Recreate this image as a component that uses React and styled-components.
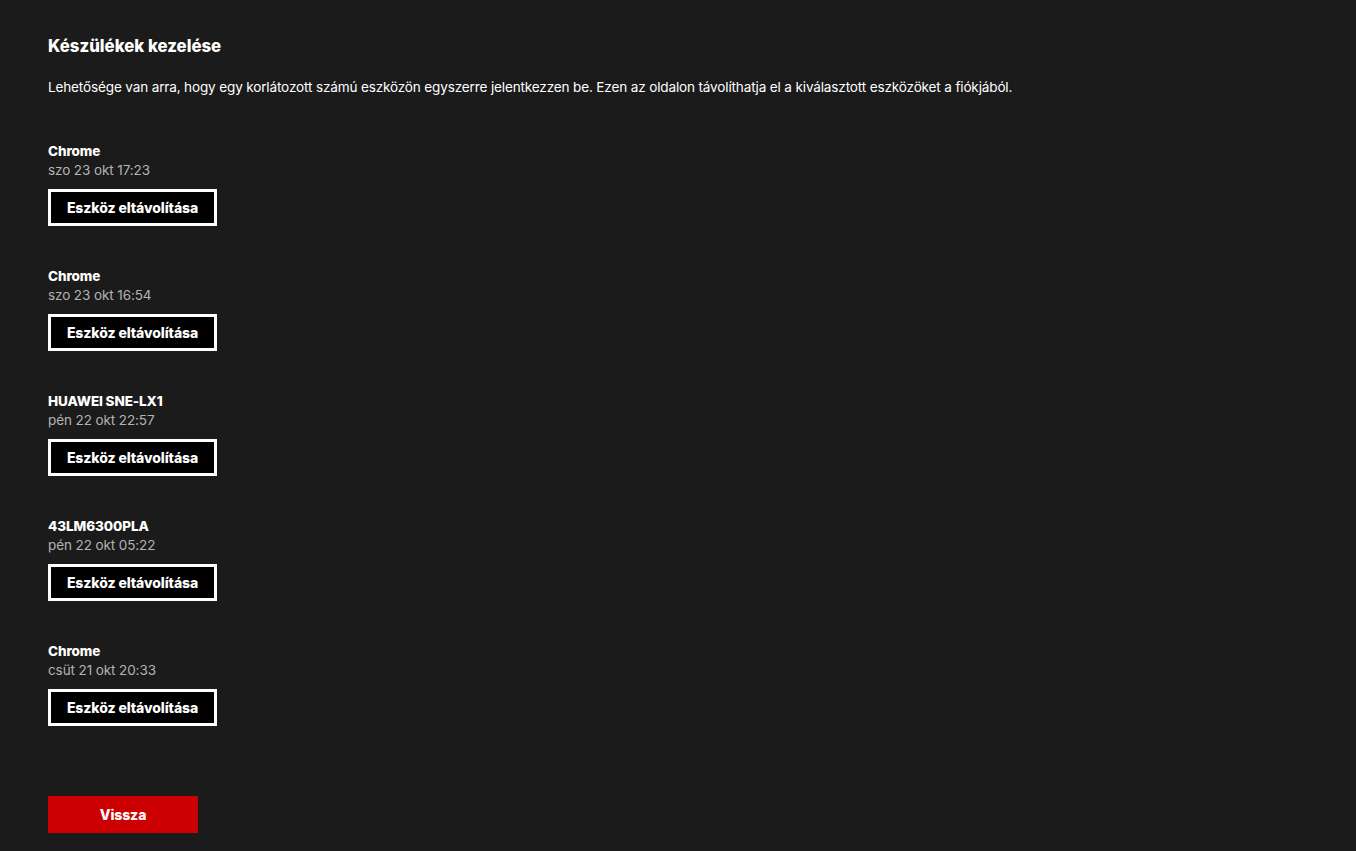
import React from "react";
import styled, { createGlobalStyle } from "styled-components";

const GlobalStyle = createGlobalStyle`
  html, body {
    margin: 0;
    padding: 0;
    background: #1b1b1b;
  }
  body {
    font-family: Inter, "Liberation Sans", Arial, sans-serif;
    color: #fff;
  }
`;

const Page = styled.div`
  min-height: 851px;
  padding: 36px 48px 18px;
  box-sizing: border-box;
  background: #1b1b1b;
`;

const Title = styled.h1`
  margin: 0;
  font-size: 16.8px;
  line-height: 20px;
  font-weight: 800;
  letter-spacing: 0;
`;

const Description = styled.p`
  margin: 21px 0 0;
  font-size: 13.55px;
  line-height: 20px;
  letter-spacing: -0.15px;
`;

const DeviceList = styled.div`
  display: flex;
  flex-direction: column;
  gap: 41px;
  margin-top: 45px;
`;

const Device = styled.div`
  display: flex;
  flex-direction: column;
`;

const DeviceName = styled.div`
  font-size: 13.5px;
  font-weight: 800;
  line-height: 19px;
  letter-spacing: -0.1px;
`;

const DeviceDate = styled.div`
  font-size: 13.5px;
  line-height: 19px;
  color: #b3b3b3;
  letter-spacing: -0.1px;
`;

const Btn = styled.button`
  box-sizing: border-box;
  margin-top: 9px;
  height: 37px;
  width: ${props => props.width}px;
  font-family: inherit;
  font-size: 14px;
  font-weight: 800;
  letter-spacing: -0.1px;
  color: #fff;
  background: ${props => (props.primary ? "#cc0000" : "#000")};
  border: ${props => (props.primary ? "none" : "3px solid #fff")};
  padding: 0;
  cursor: pointer;
`;

const Footer = styled.div`
  margin-top: 61px;
`;

const devices = [
  { name: "Chrome", date: "szo 23 okt 17:23" },
  { name: "Chrome", date: "szo 23 okt 16:54" },
  { name: "HUAWEI SNE-LX1", date: "pén 22 okt 22:57" },
  { name: "43LM6300PLA", date: "pén 22 okt 05:22" },
  { name: "Chrome", date: "csüt 21 okt 20:33" }
];

export default function App() {
  return (
    <Page>
      <GlobalStyle />
      <Title>Készülékek kezelése</Title>
      <Description>
        Lehetősége van arra, hogy egy korlátozott számú eszközön egyszerre
        jelentkezzen be. Ezen az oldalon távolíthatja el a kiválasztott
        eszközöket a fiókjából.
      </Description>
      <DeviceList>
        {devices.map((d, i) => (
          <Device key={i}>
            <DeviceName>{d.name}</DeviceName>
            <DeviceDate>{d.date}</DeviceDate>
            <Btn width={169}>Eszköz eltávolítása</Btn>
          </Device>
        ))}
      </DeviceList>
      <Footer>
        <Btn primary width={150}>
          Vissza
        </Btn>
      </Footer>
    </Page>
  );
}
